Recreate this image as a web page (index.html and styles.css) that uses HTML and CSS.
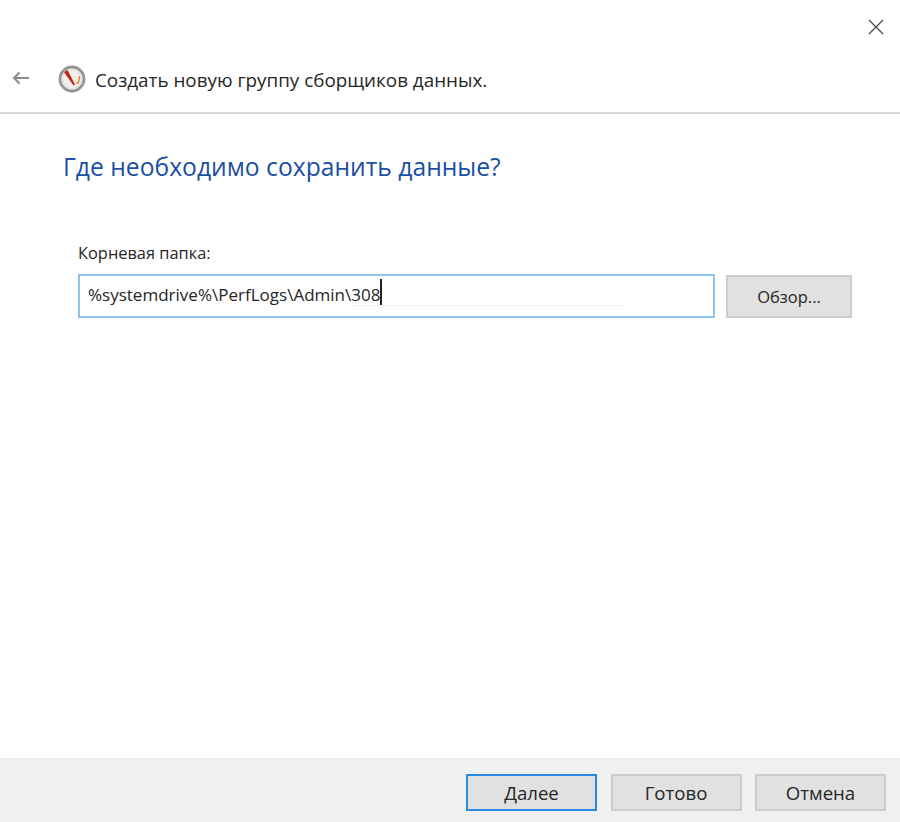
FILE: index.html
```html
<!DOCTYPE html>
<html lang="ru">
<head>
<meta charset="utf-8">
<title>Создать новую группу сборщиков данных</title>
<link rel="stylesheet" href="styles.css">
</head>
<body>
<div class="dialog">
  <div class="titlebar">
    <svg class="close" width="16" height="16" viewBox="0 0 16 16"><path d="M1 1L15 15M15 1L1 15" stroke="#4a4a4a" stroke-width="1.3" fill="none"/></svg>
  </div>
  <header class="nav">
    <svg class="back" width="18" height="14" viewBox="0 0 18 14"><path d="M17 7H2M7.500 1.500L2 7l5.500 5.500" stroke="#8a8a8a" stroke-width="2" fill="none"/></svg>
    <svg class="gauge" width="28" height="28" viewBox="0 0 28 28">
      <circle cx="14" cy="14" r="12" fill="#fff" stroke="#959595" stroke-width="2.800"/>
      <circle cx="14" cy="14" r="9.500" fill="#f4f1ea" stroke="#dcdcdc" stroke-width="1.200"/>
      <path d="M6 7L9.500 5L17 19.500L15.500 20.500Z" fill="#c8201c"/>
      <path d="M21.500 11L20.500 17.500L18 18.500" stroke="#e8893a" stroke-width="1.500" fill="none"/>
    </svg>
    <span class="nav-title">Создать новую группу сборщиков данных.</span>
  </header>
  <main class="content">
    <h1 class="heading">Где необходимо сохранить данные?</h1>
    <label class="field-label">Корневая папка:</label>
    <div class="field-row">
      <div class="input">
        <span class="input-text">%systemdrive%\PerfLogs\Admin\308</span><span class="caret"></span>
        <span class="smudge"></span>
      </div>
      <button class="btn btn-browse">Обзор...</button>
    </div>
  </main>
  <footer class="footer">
    <button class="btn btn-action btn-primary">Далее</button>
    <button class="btn btn-action">Готово</button>
    <button class="btn btn-action">Отмена</button>
  </footer>
</div>
</body>
</html>
```
FILE: styles.css
```css
* { box-sizing: border-box; }
html, body { margin: 0; padding: 0; }
body { background: #fff; font-family: "Open Sans", "Noto Sans", sans-serif; color: #262626; }
.dialog { width: 900px; height: 822px; display: flex; flex-direction: column; }
.titlebar { height: 54px; display: flex; justify-content: flex-end; padding: 19px 16px 0 0; }
.nav { height: 60px; border-bottom: 2px solid #d6d6d6; display: flex; align-items: flex-start; padding: 12px 0 0 12px; }
.back { margin-top: 5px; }
.gauge { margin: -1px 0 0 28px; }
.nav-title { margin-left: 9px; font-size: 18.830px; line-height: 28px; white-space: nowrap; }
.content { flex: 1; padding: 0 48px 0 63px; }
.heading { margin: 35px 0 0; font-size: 24.670px; font-weight: 400; line-height: 36px; color: #1c4fa5; white-space: nowrap; }
.field-label { display: block; margin: 56px 0 0 15px; font-size: 16.400px; line-height: 24px; }
.field-row { display: flex; margin: 9px 0 0 15px; align-items: flex-start; gap: 11px; }
.input { position: relative; width: 637px; height: 44px; border: 2px solid #8dc2ec; display: flex; align-items: center; padding: 0 0 3px 8px; font-size: 17.030px; }
.input-text { white-space: nowrap; }
.caret { width: 1.500px; height: 26px; background: #222; margin-bottom: 5px; }
.smudge { position: absolute; left: 270px; top: 29px; width: 277px; height: 1px; background: #edf3f8; }
.btn { font-family: inherit; color: #262626; background: #e1e1e1; border: 2px solid #cdcdcd; padding: 0; }
.btn-browse { width: 126px; height: 43px; margin-top: 1px; font-size: 16.500px; }
.footer { height: 64px; background: #f0f0f0; border-top: 1px solid #e6e6e6; display: flex; justify-content: flex-end; gap: 13.500px; padding: 15px 14px 0 0; }
.btn-action { width: 131px; height: 37px; font-size: 18.600px; }
.btn-primary { border-color: #2a8ae0; }
```
